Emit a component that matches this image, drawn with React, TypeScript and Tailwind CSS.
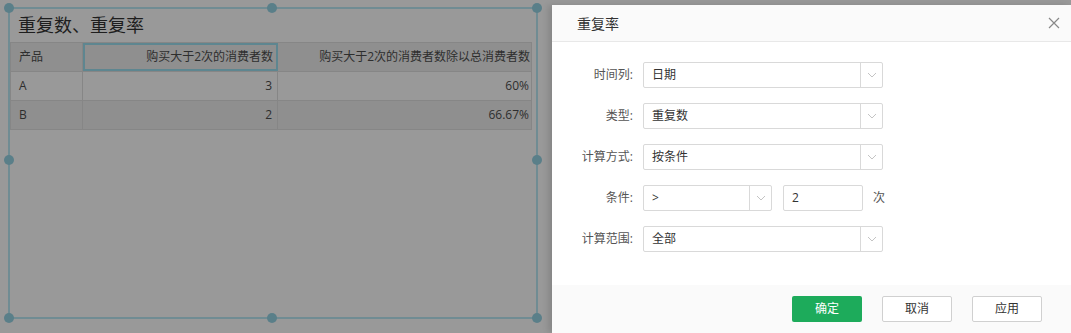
import React from "react";

const font = { fontFamily: '"Open Sans", "Noto Sans CJK SC", sans-serif' };

const Chevron = () => (
	<svg width="10" height="6" viewBox="0 0 10 6" fill="none">
		<path d="M1 1l4 4 4-4" stroke="#c4c4c4" strokeWidth="1" />
	</svg>
);

const Select = ({ value, width }: { value: string; width: string }) => (
	<div className={`${width} h-[26px] border border-[#d9d9d9] rounded-[2px] flex items-stretch bg-white`}>
		<div className="flex-1 flex items-center pl-[8px] text-[12px] text-[#333]">{value}</div>
		<div className="w-[22px] border-l border-[#d9d9d9] flex items-center justify-center">
			<Chevron />
		</div>
	</div>
);

const Row = ({ label, children }: { label: string; children: React.ReactNode }) => (
	<div className="flex items-center h-[26px]">
		<div className="w-[81px] text-right text-[12px] text-[#555] pr-[10px]">{label}</div>
		{children}
	</div>
);

const Handle = ({ x, y }: { x: string; y: string }) => (
	<div className={`absolute ${x} ${y} w-[10px] h-[10px] rounded-full bg-[#5a7f89]`} />
);

export default function App() {
	return (
		<div className="w-[1071px] h-[333px] bg-[#999999] flex overflow-hidden" style={font}>
			{/* dimmed report */}
			<div className="relative flex-1">
				<div className="absolute left-[8px] top-[7px] w-[530px] h-[312px] border-2 border-[#708c93]" />
				<div className="pl-[18px] pt-[13px] h-[42px] text-[18px] text-[#1e1e1e] leading-[24px]">重复数、重复率</div>
				<div className="ml-[10px] w-[522px] text-[12px] text-[#2e2e2e]">
					<div className="flex h-[30px] bg-[#8f8f8f] border border-[#868686]">
						<div className="w-[72px] flex items-center pl-[8px] border-r border-[#868686]">产品</div>
						<div className="w-[195px] flex items-center justify-end pr-[3px] border-2 border-[#5e8690]">购买大于2次的消费者数</div>
						<div className="flex-1 flex items-center justify-end pr-[1px]">购买大于2次的消费者数除以总消费者数</div>
					</div>
					<div className="flex h-[29px] bg-[#999999] border-x border-b border-[#868686]">
						<div className="w-[72px] flex items-center pl-[8px] border-r border-[#868686]">A</div>
						<div className="w-[195px] flex items-center justify-end pr-[5px] border-r border-[#868686]">3</div>
						<div className="flex-1 flex items-center justify-end pr-[2px]">60%</div>
					</div>
					<div className="flex h-[29px] bg-[#8f8f8f] border-x border-b border-[#868686]">
						<div className="w-[72px] flex items-center pl-[8px] border-r border-[#868686]">B</div>
						<div className="w-[195px] flex items-center justify-end pr-[5px] border-r border-[#868686]">2</div>
						<div className="flex-1 flex items-center justify-end pr-[2px]">66.67%</div>
					</div>
				</div>
				<Handle x="left-[4px]" y="top-[3px]" />
				<Handle x="left-[267px]" y="top-[3px]" />
				<Handle x="left-[532px]" y="top-[3px]" />
				<Handle x="left-[4px]" y="top-[155px]" />
				<Handle x="left-[532px]" y="top-[155px]" />
				<Handle x="left-[4px]" y="top-[313px]" />
				<Handle x="left-[267px]" y="top-[313px]" />
				<Handle x="left-[532px]" y="top-[313px]" />
			</div>

			{/* dialog */}
			<div className="w-[519px] mt-[5px] bg-white flex flex-col shadow-[-4px_0_6px_rgba(0,0,0,0.12)]">
				<div className="h-[37px] bg-[#fafafa] border-b border-[#e8e8e8] flex items-center justify-between pl-[25px] pr-[11px]">
					<span className="text-[14px] text-[#333]">重复率</span>
					<svg width="12" height="12" viewBox="0 0 12 12">
						<path d="M1 1l10 10M11 1L1 11" stroke="#888" strokeWidth="1.2" />
					</svg>
				</div>
				<div className="flex-1 pt-[20px] pl-[10px] flex flex-col gap-[15px]">
					<Row label="时间列:">
						<Select value="日期" width="w-[240px]" />
					</Row>
					<Row label="类型:">
						<Select value="重复数" width="w-[240px]" />
					</Row>
					<Row label="计算方式:">
						<Select value="按条件" width="w-[240px]" />
					</Row>
					<Row label="条件:">
						<Select value=">" width="w-[129px]" />
						<div className="ml-[11px] w-[80px] h-[26px] border border-[#d9d9d9] rounded-[2px] flex items-center pl-[8px] text-[12px] text-[#333]">2</div>
						<span className="ml-[10px] text-[12px] text-[#555]">次</span>
					</Row>
					<Row label="计算范围:">
						<Select value="全部" width="w-[240px]" />
					</Row>
				</div>
				<div className="h-[48px] bg-[#fafafa] flex items-center justify-end gap-[20px] pr-[29px]">
					<button className="w-[70px] h-[26px] bg-[#1dab5b] text-white text-[12px] rounded-[2px]">确定</button>
					<button className="w-[70px] h-[26px] bg-white border border-[#d0d0d0] text-[#333] text-[12px] rounded-[2px]">取消</button>
					<button className="w-[70px] h-[26px] bg-white border border-[#d0d0d0] text-[#333] text-[12px] rounded-[2px]">应用</button>
				</div>
			</div>
		</div>
	);
}
